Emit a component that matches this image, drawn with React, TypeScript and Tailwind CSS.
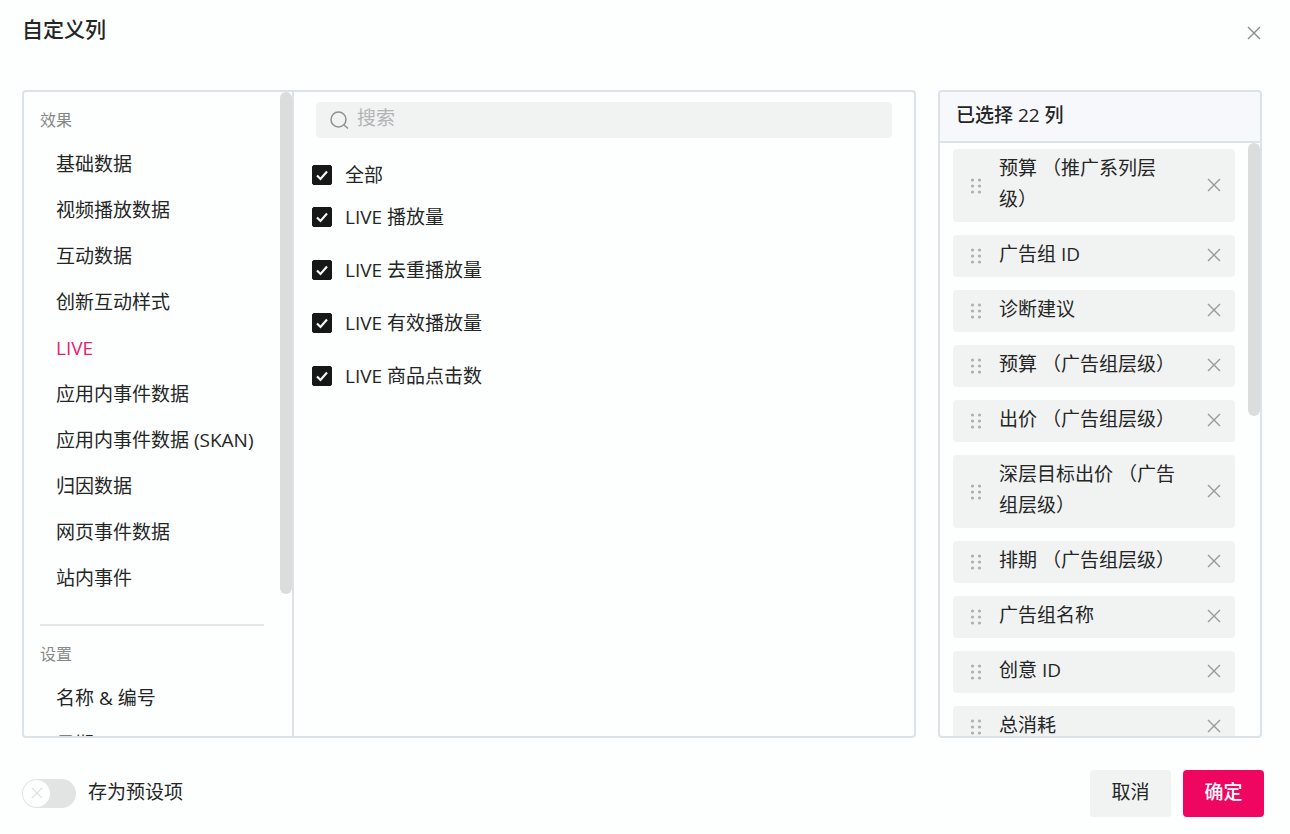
import React, { useState } from 'react';

const effectItems = [
  '基础数据',
  '视频播放数据',
  '互动数据',
  '创新互动样式',
  'LIVE',
  '应用内事件数据',
  '应用内事件数据 (SKAN)',
  '归因数据',
  '网页事件数据',
  '站内事件',
];

const settingItems = ['名称 & 编号', '日期'];

const metrics = ['LIVE 播放量', 'LIVE 去重播放量', 'LIVE 有效播放量', 'LIVE 商品点击数'];

const selectedColumns = [
  '预算 （推广系列层级）',
  '广告组 ID',
  '诊断建议',
  '预算 （广告组层级）',
  '出价 （广告组层级）',
  '深层目标出价 （广告组层级）',
  '排期 （广告组层级）',
  '广告组名称',
  '创意 ID',
  '总消耗',
];

const CloseIcon: React.FC<{ className?: string }> = ({ className }) => (
  <svg viewBox="0 0 14 14" fill="none" stroke="currentColor" strokeWidth="1.4" className={className} aria-hidden="true">
    <path d="M1 1l12 12M13 1L1 13" />
  </svg>
);

const DragIcon: React.FC = () => (
  <svg viewBox="0 0 12 16" fill="currentColor" className="h-4 w-3 shrink-0 text-[#adafb0]" aria-hidden="true">
    {[2, 8, 14].map((y) => (
      <React.Fragment key={y}>
        <circle cx="2.5" cy={y} r="1.6" />
        <circle cx="9.5" cy={y} r="1.6" />
      </React.Fragment>
    ))}
  </svg>
);

const SearchIcon: React.FC = () => (
  <svg viewBox="0 0 20 20" fill="none" stroke="currentColor" strokeWidth="1.5" className="h-5 w-5 shrink-0 text-[#8f9192]" aria-hidden="true">
    <circle cx="9.5" cy="9.5" r="7.5" />
    <path d="M15 15l4 3.5" />
  </svg>
);

interface CheckRowProps {
  label: string;
  checked: boolean;
  onChange: () => void;
}

const CheckRow: React.FC<CheckRowProps> = ({ label, checked, onChange }) => (
  <label className="flex h-8 items-center gap-[13px]">
    <span className="grid h-5 w-5 shrink-0">
      <input
        type="checkbox"
        checked={checked}
        onChange={onChange}
        className="peer col-start-1 row-start-1 h-5 w-5 appearance-none rounded-xs border border-[#161818] checked:bg-[#161818]"
      />
      <svg
        viewBox="0 0 20 20"
        fill="none"
        stroke="#f4f5f5"
        strokeWidth="2.2"
        className="pointer-events-none invisible col-start-1 row-start-1 h-5 w-5 peer-checked:visible"
        aria-hidden="true"
      >
        <path d="M5 10.5l3.5 3.5L15 6.5" />
      </svg>
    </span>
    {label}
  </label>
);

interface MenuItemProps {
  label: string;
  active: boolean;
  onClick: () => void;
}

const MenuItem: React.FC<MenuItemProps> = ({ label, active, onClick }) => (
  <button
    type="button"
    onClick={onClick}
    className={`block h-[46px] w-full whitespace-nowrap pl-4 text-left ${active ? 'text-[#e5216f]' : ''}`}
  >
    {label}
  </button>
);

const App: React.FC = () => {
  const [active, setActive] = useState('LIVE');
  const [columns, setColumns] = useState(selectedColumns);
  const [checked, setChecked] = useState(metrics);
  const [preset, setPreset] = useState(false);

  const allChecked = checked.length === metrics.length;

  const toggle = (name: string) =>
    setChecked((prev) => (prev.includes(name) ? prev.filter((n) => n !== name) : [...prev, name]));

  return (
    <div className="flex h-screen flex-col bg-[#fdfefe] pl-[22px] pr-7 font-['Open_Sans','Noto_Sans_CJK_SC',sans-serif] text-[19px] leading-[30px] text-[#242626]">
      <header className="flex h-[90px] shrink-0 items-start justify-between pt-3.5">
        <h1 className="text-[21px] font-medium">自定义列</h1>
        <button type="button" aria-label="关闭" className="mt-3 mr-px text-[#8a8c8d]">
          <CloseIcon className="h-3.5 w-3.5" />
        </button>
      </header>

      <main className="flex min-h-0 flex-1 gap-[22px]">
        <section className="flex min-w-0 flex-1 overflow-hidden rounded-sm border-2 border-[#dbe3e7]">
          <nav className="flex w-[270px] shrink-0 border-r-2 border-[#dbe3e7]">
            <div className="min-w-0 flex-1 overflow-hidden pl-4 pr-4 pt-3">
              <h2 className="text-base leading-8 text-[#86898a]">效果</h2>
              <div className="pt-[5px] pb-[23px]">
                {effectItems.map((item) => (
                  <MenuItem key={item} label={item} active={item === active} onClick={() => setActive(item)} />
                ))}
              </div>
              <h2 className="border-t-2 border-[#e3e8eb] pt-3 text-base leading-8 text-[#86898a]">设置</h2>
              <div className="pt-[5px]">
                {settingItems.map((item) => (
                  <MenuItem key={item} label={item} active={item === active} onClick={() => setActive(item)} />
                ))}
              </div>
            </div>
            <div className="w-3 shrink-0">
              <div className="h-[78%] rounded-full bg-[#dbdddd]" />
            </div>
          </nav>

          <div className="min-w-0 flex-1 pt-2.5 pr-[22px] pl-[18px]">
            <div className="ml-1 flex h-9 items-center gap-2 rounded-sm bg-[#f1f2f2] pr-3.5 pl-[13px]">
              <SearchIcon />
              <input
                type="text"
                aria-label="搜索"
                placeholder="搜索"
                className="min-w-0 flex-1 bg-transparent pb-1 outline-none placeholder:text-[#b3b5b6]"
              />
            </div>
            <div className="flex flex-col gap-[21px] pt-[21px]">
              <div className="flex flex-col gap-2.5">
                <CheckRow label="全部" checked={allChecked} onChange={() => setChecked(allChecked ? [] : metrics)} />
                <CheckRow label={metrics[0]} checked={checked.includes(metrics[0])} onChange={() => toggle(metrics[0])} />
              </div>
              {metrics.slice(1).map((name) => (
                <CheckRow key={name} label={name} checked={checked.includes(name)} onChange={() => toggle(name)} />
              ))}
            </div>
          </div>
        </section>

        <aside className="flex w-[324px] shrink-0 flex-col overflow-hidden rounded-sm border-2 border-[#dbe3e7]">
          <h2 className="h-[51px] shrink-0 border-b-2 border-[#dbe3e7] bg-[#f6f8fb] px-4 pt-2 font-medium">已选择 22 列</h2>
          <div className="flex min-h-0 flex-1">
            <ul className="flex min-w-0 flex-1 flex-col gap-[13px] overflow-hidden pt-1.5 pr-[13px] pl-[13px]">
              {columns.map((column) => (
                <li key={column} className="flex shrink-0 items-center rounded-sm bg-[#f1f2f2] pr-3.5 pl-[17px]">
                  <DragIcon />
                  <span className="ml-[17px] min-w-0 flex-1 pt-1 pb-[7px] pr-7 leading-[31px]">{column}</span>
                  <button
                    type="button"
                    aria-label={`移除 ${column}`}
                    className="pb-0.5 text-[#97999a]"
                    onClick={() => setColumns((prev) => prev.filter((c) => c !== column))}
                  >
                    <CloseIcon className="h-3.5 w-3.5" />
                  </button>
                </li>
              ))}
            </ul>
            <div className="w-3 shrink-0">
              <div className="h-[46%] rounded-full bg-[#dbdddd]" />
            </div>
          </div>
        </aside>
      </main>

      <footer className="flex h-24 shrink-0 items-center justify-between pt-3.5">
        <label className="flex items-center gap-3">
          <input
            type="checkbox"
            role="switch"
            checked={preset}
            onChange={() => setPreset(!preset)}
            className="peer sr-only"
          />
          <span className="flex h-[29px] w-[54px] items-center rounded-full bg-[#e2e3e3] px-px peer-checked:justify-end peer-checked:bg-[#ef0660]">
            <span className="flex h-[27px] w-[27px] items-center justify-center rounded-full bg-[#fdfefe] text-[#dedfdf]">
              <CloseIcon className="h-3 w-3" />
            </span>
          </span>
          <span className="pb-0.5">存为预设项</span>
        </label>
        <div className="-mr-0.5 flex gap-3">
          <button type="button" className="h-[47px] w-[81px] rounded-sm bg-[#f1f2f2] pb-0.5">
            取消
          </button>
          <button type="button" className="h-[47px] w-[81px] rounded-sm bg-[#ef0660] pb-0.5 font-medium text-white">
            确定
          </button>
        </div>
      </footer>
    </div>
  );
};

export default App;
